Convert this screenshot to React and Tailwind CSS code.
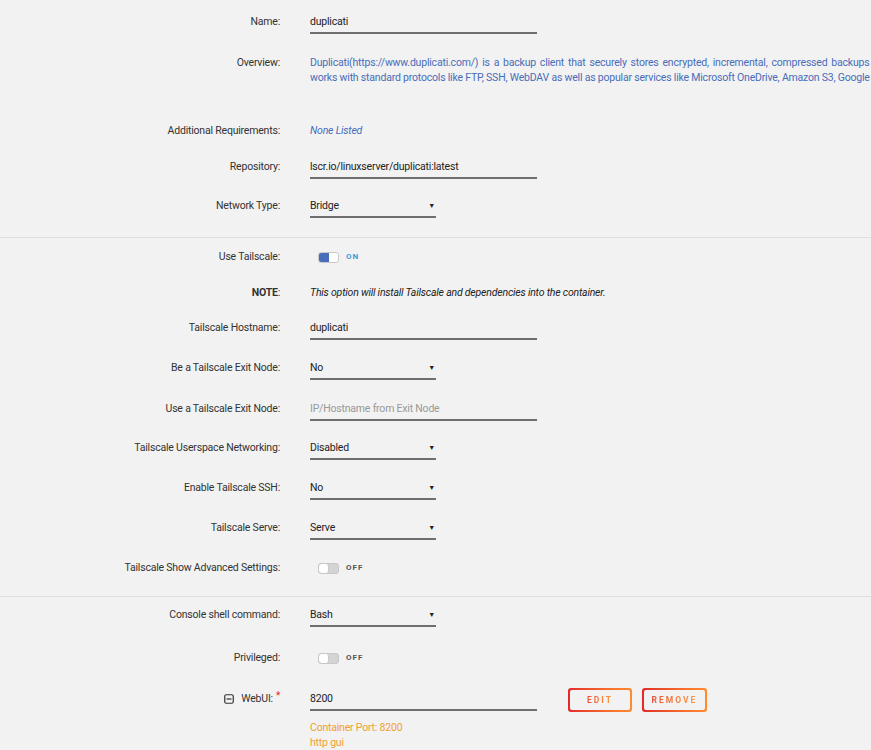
import React from "react";

const font = { fontFamily: 'Roboto, "Liberation Sans", sans-serif', letterSpacing: "-0.2px" };

function Label({ children }) {
  return (
    <div className="w-[280px] shrink-0 text-right pt-[5px] leading-[16px] text-[#333]">
      {children}
    </div>
  );
}

function Row({ h, label, children }) {
  return (
    <div className="flex" style={{ height: h }}>
      <Label>{label}</Label>
      <div className="ml-[30px] min-w-0 flex-1">{children}</div>
    </div>
  );
}

function Input({ value, placeholder, w = "w-[227px]" }) {
  return (
    <div className={`${w} h-[25px] border-b-2 border-[#6e6e6e] pt-[5px] leading-[16px] text-[#222]`}>
      {value ? value : <span className="text-[#999]">{placeholder}</span>}
    </div>
  );
}

function Select({ value }) {
  return (
    <div className="w-[126px] h-[25px] border-b-2 border-[#6e6e6e] pt-[5px] leading-[16px] text-[#222] flex justify-between items-start">
      <span>{value}</span>
      <span className="text-[7px] leading-[16px] pr-[1px] text-[#222]">▼</span>
    </div>
  );
}

function Toggle({ on }) {
  return (
    <div className="flex items-center pt-[7px] pl-[8px]">
      <div className={`w-[21px] h-[11px] rounded-[3px] border border-[#c8c8c8] flex overflow-hidden ${on ? "bg-white" : "bg-[#d4d4d4]"}`}>
        {on ? (
          <>
            <div className="w-[10px] h-full bg-[#486dba]" />
            <div className="w-[9px] h-full bg-white rounded-[3px]" />
          </>
        ) : (
          <div className="w-[10px] h-full bg-white rounded-[3px] border-r border-[#c8c8c8]" />
        )}
      </div>
      <span className={`ml-[7px] text-[8px] font-bold tracking-[1px] ${on ? "text-[#3b9ad8]" : "text-[#555]"}`}>
        {on ? "ON" : "OFF"}
      </span>
    </div>
  );
}

function GradButton({ children, w }) {
  return (
    <div className={`${w} h-[24px] rounded-[3px] p-[2px] bg-gradient-to-r from-[#e22828] to-[#ff8c2f]`}>
      <div className="w-full h-full bg-[#f2f2f2] rounded-[2px] flex items-center justify-center">
        <span className="text-[8.5px] font-bold tracking-[2px] bg-gradient-to-r from-[#e8503a] to-[#ff9a3c] bg-clip-text text-transparent">
          {children}
        </span>
      </div>
    </div>
  );
}

export default function App() {
  return (
    <div className="w-[871px] h-[750px] overflow-hidden bg-[#f2f2f2] text-[10.5px]" style={font}>
      <div className="pt-[9px]">
        <Row h={41} label="Name:">
          <Input value="duplicati" />
        </Row>
        <Row h={68} label="Overview:">
          <div className="pt-[5px] leading-[15px] text-[#486dba] whitespace-nowrap">
            <div className="[word-spacing:1.5px]">Duplicati(https://www.duplicati.com/) is a backup client that securely stores encrypted, incremental, compressed backups on cloud storage services and remote file servers. It</div>
            <div>works with standard protocols like FTP, SSH, WebDAV as well as popular services like Microsoft OneDrive, Amazon S3, Google Drive, box.com, Mega, hubiC and many others.</div>
          </div>
        </Row>
        <Row h={36} label="Additional Requirements:">
          <div className="pt-[5px] leading-[16px] italic text-[#486dba]">None Listed</div>
        </Row>
        <Row h={39} label="Repository:">
          <Input value="lscr.io/linuxserver/duplicati:latest" />
        </Row>
        <Row h={44} label="Network Type:">
          <Select value="Bridge" />
        </Row>
      </div>
      <div className="h-px bg-[#dedede]" />
      <div className="pt-[6px]">
        <Row h={36} label="Use Tailscale:">
          <Toggle on />
        </Row>
        <Row h={35} label={<><span className="font-bold">NOTE</span>:</>}>
          <div className="pt-[5px] leading-[16px] italic text-[#222]">
            This option will install Tailscale and dependencies into the container.
          </div>
        </Row>
        <Row h={40} label="Tailscale Hostname:">
          <Input value="duplicati" />
        </Row>
        <Row h={41} label="Be a Tailscale Exit Node:">
          <Select value="No" />
        </Row>
        <Row h={39} label="Use a Tailscale Exit Node:">
          <Input placeholder="IP/Hostname from Exit Node" />
        </Row>
        <Row h={40} label="Tailscale Userspace Networking:">
          <Select value="Disabled" />
        </Row>
        <Row h={40} label="Enable Tailscale SSH:">
          <Select value="No" />
        </Row>
        <Row h={40} label="Tailscale Serve:">
          <Select value="Serve" />
        </Row>
        <Row h={41} label="Tailscale Show Advanced Settings:">
          <Toggle />
        </Row>
      </div>
      <div className="h-px bg-[#dedede]" />
      <div className="pt-[5px]">
        <Row h={43} label="Console shell command:">
          <Select value="Bash" />
        </Row>
        <Row h={41} label="Privileged:">
          <Toggle />
        </Row>
        <div className="flex items-start">
          <div className="w-[280px] shrink-0 pt-[5px] leading-[16px] text-[#333] flex justify-end items-center">
            <svg width="10" height="10" viewBox="0 0 10 10" className="mr-[7px]">
              <rect x="0.75" y="0.75" width="8.5" height="8.5" rx="1.5" fill="none" stroke="#333" strokeWidth="1.2" />
              <line x1="2.5" y1="5" x2="7.5" y2="5" stroke="#333" strokeWidth="1.2" />
            </svg>
            <span>WebUI:</span>
            <span className="text-[#e22828] text-[10px] leading-[10px] ml-[3px] self-start">*</span>
          </div>
          <div className="ml-[30px]">
            <div className="flex items-start">
              <Input value="8200" />
              <div className="ml-[31px] mt-[2px] flex gap-[10px]">
                <GradButton w="w-[64px]">EDIT</GradButton>
                <GradButton w="w-[65px]">REMOVE</GradButton>
              </div>
            </div>
            <div className="mt-[8px] leading-[15px] text-[#f0a030]">
              <div>Container Port: 8200</div>
              <div>http gui</div>
            </div>
          </div>
        </div>
      </div>
    </div>
  );
}
